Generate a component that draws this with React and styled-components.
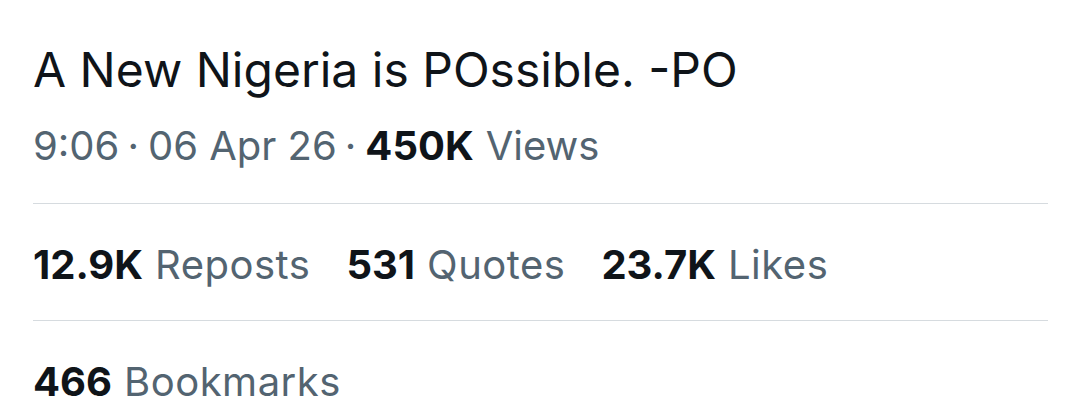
import React from "react";
import styled, { createGlobalStyle } from "styled-components";

const Global = createGlobalStyle`
  html, body { margin: 0; padding: 0; background: #ffffff; }
  body { font-family: Inter, "Noto Sans", sans-serif; color: #0f1419; }
`;

const Page = styled.div`
  width: 1080px;
  height: 411px;
  overflow: hidden;
  padding: 0 32px 0 33px;
  box-sizing: border-box;
  display: flex;
  flex-direction: column;
`;

const Title = styled.div`
  font-size: 48px;
  line-height: 56px;
  margin-top: 42px;
`;

const Meta = styled.div`
  font-size: 40px;
  line-height: 48px;
  margin-top: 24px;
  margin-bottom: 33px;
  color: #536471;
  display: flex;
  align-items: baseline;
`;

const Dot = styled.span`
  margin: 0 9px 0 8px;
`;

const Strong = styled.span`
  color: #0f1419;
  font-weight: 700;
  letter-spacing: 0;
  margin-right: 12px;
`;

const Divider = styled.hr`
  border: 0;
  border-top: 1px solid #d6dbdf;
  margin: 0;
  width: 100%;
`;

const Row = styled.div`
  display: flex;
  align-items: baseline;
  gap: 36px;
  height: ${(p) => p.$h}px;
  padding-top: 37px;
  box-sizing: border-box;
  font-size: 40px;
  line-height: 48px;
`;

const Stat = styled.span`
  color: #536471;
  letter-spacing: 0.5px;
`;

export default function App() {
  return (
    <>
      <Global />
      <Page>
        <Title>A New Nigeria is POssible. -PO</Title>
        <Meta>
          <span>9:06</span>
          <Dot>·</Dot>
          <span>06 Apr 26</span>
          <Dot>·</Dot>
          <Strong>450K</Strong>
          <span>Views</span>
        </Meta>
        <Divider />
        <Row $h={116}>
          <Stat><Strong>12.9K</Strong>Reposts</Stat>
          <Stat><Strong>531</Strong>Quotes</Stat>
          <Stat><Strong>23.7K</Strong>Likes</Stat>
        </Row>
        <Divider />
        <Row $h={90}>
          <Stat><Strong>466</Strong>Bookmarks</Stat>
        </Row>
      </Page>
    </>
  );
}
